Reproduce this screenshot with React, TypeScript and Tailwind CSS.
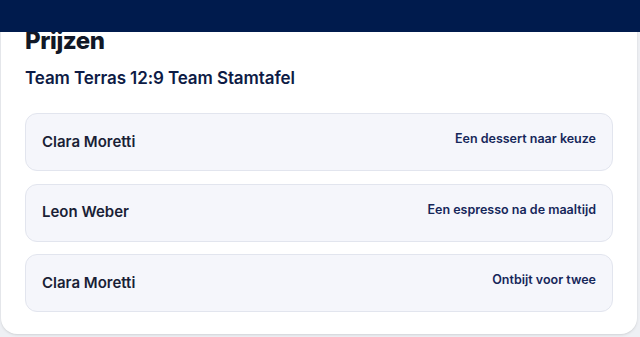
import React from 'react';

const prizes = [
  { name: 'Clara Moretti', prize: 'Een dessert naar keuze' },
  { name: 'Leon Weber', prize: 'Een espresso na de maaltijd' },
  { name: 'Clara Moretti', prize: 'Ontbijt voor twee' },
];

const App = () => {
  return (
    <div className="relative min-h-[337px] bg-[#eef0f4] font-['Inter',sans-serif]">
      {/* sticky top bar over the scrolled card */}
      <div className="absolute left-0 right-0 top-0 z-10 h-[32px] bg-[#001b4d]" />

      <section className="ml-[1px] w-[636px] rounded-b-2xl bg-white px-6 pb-[22px] pt-[26px] shadow-sm">
        <h2 className="text-[24px] font-extrabold leading-[30px] tracking-[-0.4px] text-[#111827]">Prijzen</h2>
        <p className="mt-[10px] text-[17px] font-semibold leading-[24px] tracking-[-0.1px] text-[#0d1b45]">
          Team Terras 12:9 Team Stamtafel
        </p>

        <div className="mt-[23px] flex flex-col gap-[12.5px]">
          {prizes.map((p, i) => (
            <div
              key={i}
              className="flex h-[58px] items-center justify-between rounded-xl border border-[#e2e5ee] bg-[#f5f6fb] pl-[16px] pr-[16px]"
            >
              <span className="text-[15px] font-semibold text-[#1a1f36]">{p.name}</span>
              <span className="mb-[5px] text-[12.5px] font-semibold text-[#16275a]">{p.prize}</span>
            </div>
          ))}
        </div>
      </section>
    </div>
  );
};

export default App;
